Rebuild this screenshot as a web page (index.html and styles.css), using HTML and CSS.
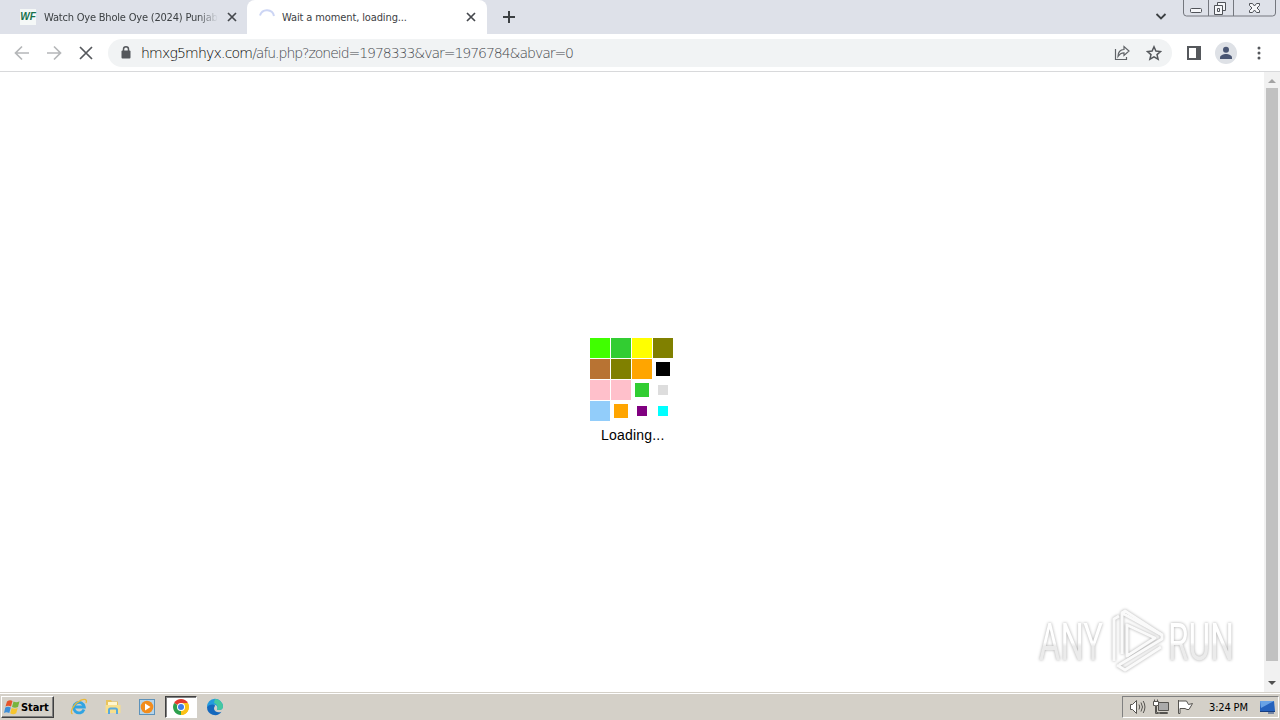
FILE: index.html
```html
<!DOCTYPE html>
<html lang="en">
<head>
<meta charset="utf-8">
<title>Wait a moment, loading...</title>
<link rel="stylesheet" href="styles.css">
</head>
<body>

<div class="tabstrip">
  <div class="tab tab-first">
    <span class="favicon">WF</span>
    <span class="tab-title faded">Watch Oye Bhole Oye (2024) Punjabi</span>
    <svg class="tab-close" width="10" height="10" viewBox="0 0 10 10"><path d="M1 1l8 8M9 1l-8 8"/></svg>
  </div>
  <div class="tab tab-active">
    <svg class="spinner" width="16" height="16" viewBox="0 0 16 16"><path d="M1 6.5A7.2 7.2 0 0 1 15 7"/></svg>
    <span class="tab-title">Wait a moment, loading...</span>
    <svg class="tab-close" width="10" height="10" viewBox="0 0 10 10"><path d="M1 1l8 8M9 1l-8 8"/></svg>
  </div>
  <svg class="newtab" width="12" height="12" viewBox="0 0 12 12"><path d="M6 0v12M0 6h12"/></svg>
  <svg class="tabsearch" width="12" height="12" viewBox="0 0 12 12"><path d="M1.5 4L6 8.5 10.5 4"/></svg>
  <svg class="winbuttons" width="94" height="17" viewBox="0 0 94 17">
    <path class="frame" d="M.5 0v13q0 3 3 3h86q3 0 3-3V0M25.500 0v16M50.500 0v16"/>
    <rect class="glyph" x="7.500" y="8.500" width="11" height="4" rx="1"/>
    <path class="glyph" d="M34.500 5.500v-3h8v8h-3M31.500 5.500h8v9h-8zM34.500 8.500h2v3h-2z"/>
    <path class="glyph" d="M66.500 3.500h3l2 2.500 2-2.500h3v2L74 8l2.500 2.500v2h-3l-2-2.500-2 2.500h-3v-2L69 8l-2.500-2.500z"/>
  </svg>
</div>

<div class="toolbar">
  <svg class="nav nav-off" width="16" height="16" viewBox="0 0 16 16"><path d="M15 8H2M8 1.500L1.500 8 8 14.500"/></svg>
  <svg class="nav nav-off" width="16" height="16" viewBox="0 0 16 16"><path d="M1 8h13M8 1.500L14.500 8 8 14.500"/></svg>
  <svg class="nav" width="16" height="16" viewBox="0 0 16 16"><path d="M2 2l12 12M14 2L2 14"/></svg>
  <div class="omnibox">
    <svg class="lock" width="10" height="13" viewBox="0 0 10 13"><rect x="0.500" y="4.500" width="9" height="8" rx="1"/><path d="M2.500 5V3.300a2.500 2.500 0 0 1 5 0V5"/></svg>
    <span class="url"><span class="host">hmxg5mhyx.com</span>/afu.php?zoneid=1978333&amp;var=1976784&amp;abvar=0</span>
    <svg class="share" width="16" height="16" viewBox="0 0 16 16"><path d="M1.500 4v10.500h11v-2.500M4 11.500C4 7 6.500 4.500 10 4.500V1.500l5 4.500-5 4.500V7.800C7.500 7.800 5.500 9 4 11.500z"/></svg>
    <svg class="star" width="16" height="16" viewBox="0 0 16 16"><path d="M8 1.800l1.900 4.300 4.600.4-3.500 3.100 1.100 4.600L8 11.800l-4.100 2.400L5 9.600 1.500 6.500l4.600-.4z"/></svg>
  </div>
  <svg class="panel" width="14" height="14" viewBox="0 0 14 14"><path d="M0 0h14v14H0zM2 2v10h7V2z" fill-rule="evenodd"/></svg>
  <svg class="avatar" width="22" height="22" viewBox="0 0 22 22"><circle class="disc" cx="11" cy="11" r="11"/><circle cx="11" cy="7.800" r="3"/><path d="M5 17v-1.500c0-2 3.500-3.500 6-3.500s6 1.500 6 3.500V17z"/></svg>
  <svg class="dots" width="4" height="14" viewBox="0 0 4 14"><circle cx="2" cy="2" r="1.500"/><circle cx="2" cy="7" r="1.500"/><circle cx="2" cy="12" r="1.500"/></svg>
</div>

<div class="page">
  <div class="view">
    <div class="loader">
      <div class="grid">
        <i class="lime"></i><i class="green"></i><i class="yellow"></i><i class="olive"></i>
        <i class="brown"></i><i class="olive"></i><i class="orange"></i><i class="black mid"></i>
        <i class="pink"></i><i class="pink"></i><i class="green mid"></i><i class="gray small"></i>
        <i class="sky"></i><i class="orange mid"></i><i class="purple small"></i><i class="cyan small"></i>
      </div>
      <div class="loading">Loading...</div>
    </div>
    <svg class="watermark" width="216" height="76" viewBox="0 0 216 76">
      <defs>
        <linearGradient id="fade" x1="0" y1="0" x2="0" y2="1">
          <stop offset=".5" stop-color="#fff"/><stop offset=".56" stop-color="#ebebeb"/>
        </linearGradient>
      </defs>
      <g class="mark">
        <text x="8" y="56" textLength="64" lengthAdjust="spacingAndGlyphs">ANY</text>
        <text x="137" y="56" textLength="66" lengthAdjust="spacingAndGlyphs">RUN</text>
        <path d="M83 57V15l5-3M86 61l8 5 36-23"/>
        <path d="M91 50V9l40 22v4L88 61"/>
        <path d="M91 9l3-2 37 24M96 21v31l28-18z"/>
      </g>
    </svg>
  </div>
  <div class="scrollbar">
    <svg width="8" height="4" viewBox="0 0 8 4"><path class="up" d="M0 4l4-4 4 4z"/></svg>
    <div class="thumb"></div>
    <svg width="8" height="4" viewBox="0 0 8 4"><path class="down" d="M0 0l4 4 4-4z"/></svg>
  </div>
</div>

<div class="taskbar">
  <div class="start">
    <svg width="17" height="16" viewBox="0 0 17 16">
      <path fill="#e6542a" d="M3 2.500q3-2 5.500-.5L7 7.500q-3-1.500-5.500 0z"/>
      <path fill="#78b43c" d="M9.500 2.500q3 1.500 6-.2L14 8q-3 1.500-6 0z"/>
      <path fill="#3d8ed8" d="M1.300 8.500q2.700-1.500 5.500 0L5.300 14q-3-1.500-5.300 0z"/>
      <path fill="#f6c52e" d="M7.700 9q3 1.500 6 0l-1.500 5.300q-3 1.700-6 0z"/>
    </svg>
    <span>Start</span>
  </div>
  <div class="quick">
    <svg width="18" height="18" viewBox="0 0 18 18"><path d="M14 11.500A5.300 5.300 0 1 1 14.300 9H5" fill="none" stroke="#31a4e2" stroke-width="2.800"/><path d="M2.500 16C-1 14 4 5.500 11 2.200 15 .5 17.500 1.500 16 5" fill="none" stroke="#e9b93a" stroke-width="1.300"/></svg>
  </div>
  <div class="quick">
    <svg width="18" height="18" viewBox="0 0 18 18"><path d="M2 3.500V2h5l1 1.500h6V15H2z" fill="#e9c45d"/><path d="M4 4h9v6H4z" fill="#fff6cf"/><path d="M1.500 7h15v8h-15z" fill="#f7df8d"/><path d="M5 16v-4q0-1.500 1.500-1.500h5Q13 10.500 13 12v4" fill="none" stroke="#58aadd" stroke-width="2"/></svg>
  </div>
  <div class="quick">
    <svg width="18" height="18" viewBox="0 0 18 18"><rect x="1.500" y="1.500" width="15" height="15" fill="#b5d4ea" stroke="#5d92ba"/><circle cx="9" cy="9" r="6.300" fill="#f28c1c"/><path d="M7 5.500v7l5.500-3.500z" fill="#fff"/></svg>
  </div>
  <div class="quick pressed">
    <svg width="16" height="16" viewBox="0 0 16 16"><path d="M8 8L1.100 4A8 8 0 0 1 14.900 4z" fill="#e33b2e"/><path d="M8 8l6.900-4A8 8 0 0 1 8 16z" fill="#fbc116"/><path d="M8 8v8A8 8 0 0 1 1.100 4z" fill="#2da04d"/><path d="M8 4h6.900A8 8 0 0 1 8 16l3.500-6z" fill="#fbc116"/><circle cx="8" cy="8" r="4" fill="#fff"/><circle cx="8" cy="8" r="3" fill="#3f7de8"/></svg>
  </div>
  <div class="quick">
    <svg width="18" height="18" viewBox="0 0 18 18"><path d="M1 9a8 8 0 0 0 14.500 4.700c-3.500 1.500-7.500 0-7.500-3.200 0-1.500 1-2 1-3C7 4.500 2 5 1 9z" fill="#1468bd"/><path d="M1 9A8 8 0 0 1 17 8.500c0 3-3 4.200-6 3.200 1.300-2 0-5.200-4-5.200-3 0-5 1-6 2.500z" fill="#249bdd"/><path d="M9 1a8 8 0 0 1 8 7.500c0 3-3 4.200-6 3.200C12.500 9 11 6 8 5z" fill="#45c8a0"/></svg>
  </div>
  <div class="tray">
    <svg class="tray-icon" width="17" height="16" viewBox="0 0 17 16"><path d="M1.500 5.500h2l4-4v13l-4-4h-2z"/><path class="line" d="M10 5.500q1.500 2.500 0 5M12 3.500q3 4.500 0 9M14.200 2q3.500 6 0 12"/></svg>
    <svg class="tray-icon" width="17" height="16" viewBox="0 0 17 16"><path class="screen" d="M5.500 3.500h10v8h-10z"/><path d="M.5 2.500h5v4h-2v7h2v1h-3v-8h-2zM1.500 2.500v-2M4.500 2.500v-2M6.500 13.500h8v1h-8z"/></svg>
    <svg class="tray-icon" width="17" height="16" viewBox="0 0 17 16"><path d="M1.500 1v13.500h1.500V9.500h5l2 1h2l3.500-6-4 1-2-3.500H1.500z"/></svg>
    <span class="clock">3:24 PM</span>
    <svg width="17" height="14" viewBox="0 0 17 14"><path d="M1 1h14l1 10H1z" fill="#2562bd"/><path d="M1 1h14L2 8z" fill="#68a2e5"/><path d="M1 11.500h15M9 13h6" stroke="#173d80" fill="none"/></svg>
  </div>
</div>

</body>
</html>
```

FILE: styles.css
```css
/* Browser window */

body
{ margin: 0;
height: 720px;
display: flex;
flex-direction: column;
overflow: hidden;
background: #fff;
font-family: "DejaVu Sans Condensed", "DejaVu Sans", sans-serif;
font-stretch: condensed;
}

svg
{ display: block;
flex: none;
}

/* Tabs */

.tabstrip
{ height: 34px;
flex: none;
display: flex;
background: #dee1e9;
}

.tab
{ display: flex;
align-items: center;
box-sizing: border-box;
height: 34px;
font-size: 11px;
color: #3c4043;
}

.tab-first
{ width: 247px;
padding: 0 10px 0 20px;
}

.tab-active
{ width: 240px;
padding: 0 11px 0 12px;
background: #fff;
border-radius: 8px 8px 0 0;
}

.favicon
{ width: 16px;
height: 16px;
margin-right: 8px;
background: #f5f8f7;
color: #17714b;
font: italic bold 10px/15px "Liberation Sans", sans-serif;
text-align: center;
}

.tab-title
{ flex: 1;
white-space: nowrap;
overflow: hidden;
letter-spacing: -0.12px;
}

.faded
{ flex: none;
width: 174px;
margin-right: 9px;
letter-spacing: -0.2px;
-webkit-mask-image: linear-gradient(90deg, #000 154px, transparent);
mask-image: linear-gradient(90deg, #000 154px, transparent);
}

.tab-close
{ fill: none;
stroke: #45484d;
stroke-width: 1.7;
}

.spinner
{ margin-right: 7px;
fill: none;
stroke: #ccd5f4;
stroke-width: 2;
}

.newtab
{ margin: 11px 0 0 16px;
fill: none;
stroke: #3c4043;
stroke-width: 2;
}

.tabsearch
{ margin: 10px 16px 0 auto;
fill: none;
stroke: #3c4043;
stroke-width: 1.8;
}

.winbuttons
{ margin-right: 3px;
}

.winbuttons path, .winbuttons rect
{ fill: none;
stroke: #74777e;
}

.winbuttons .glyph
{ fill: #f5f6f9;
stroke: #505359;
}

/* Toolbar */

.toolbar
{ height: 37px;
flex: none;
display: flex;
align-items: center;
border-bottom: 1px solid #d8d9db;
padding-left: 14px;
}

.nav
{ margin-right: 16px;
fill: none;
stroke: #55585c;
stroke-width: 1.7;
}

.nav-off
{ stroke: #b5b7b9;
}

.omnibox
{ display: flex;
align-items: center;
box-sizing: border-box;
width: 1064px;
height: 28px;
margin-left: -2px;
padding: 0 10px 0 13px;
border-radius: 14px;
background: #f1f3f4;
}

.lock
{ margin-right: 10px;
fill: #55585c;
}

.lock path
{ fill: none;
stroke: #55585c;
stroke-width: 1.5;
}

.url
{ flex: 1;
font: 200 14px "DejaVu Sans Light", "DejaVu Sans", sans-serif;
white-space: nowrap;
color: #45484d;
letter-spacing: -1.03px;
}

.host
{ color: #000;
letter-spacing: -0.8px;
}

.share
{ margin-right: 16px;
fill: none;
stroke: #606367;
stroke-width: 1.2;
}

.star
{ fill: none;
stroke: #55585c;
stroke-width: 1.5;
}

.panel
{ margin-left: 15px;
fill: #55585c;
}

.avatar
{ margin-left: 14px;
fill: #4a5673;
}

.avatar .disc
{ fill: #dee1e6;
}

.dots
{ margin-left: 20px;
fill: #55585c;
}

/* Page */

.page
{ flex: 1;
display: flex;
min-height: 0;
}

.view
{ flex: 1;
position: relative;
}

.loader
{ width: 84px;
margin: 266px 0 0 590px;
}

.grid
{ display: grid;
grid-template-columns: repeat(4, 20px);
grid-auto-rows: 20px;
gap: 1px;
place-items: center;
}

.grid i
{ width: 20px;
height: 20px;
}

.grid .mid
{ width: 14px;
height: 14px;
}

.grid .small
{ width: 10px;
height: 10px;
}

.lime { background: #40ff00; }
.green { background: #32cd32; }
.yellow { background: #ff0; }
.olive { background: #808000; }
.brown { background: #b87333; }
.orange { background: #ffa500; }
.black { background: #000; }
.pink { background: #ffc0cb; }
.gray { background: #ddd; }
.sky { background: #92cdfa; }
.purple { background: #800080; }
.cyan { background: #0ff; }

.loading
{ margin: 6px 0 0 11px;
font: 14px/16px "Liberation Sans", Arial, sans-serif;
letter-spacing: 0.2px;
white-space: nowrap;
color: #000;
}

/* Watermark lies over the page */

.watermark
{ position: absolute;
right: 17px;
bottom: 12px;
}

.mark
{ filter: drop-shadow(0 0 1.5px #aaa);
}

.mark text
{ font: 52px Roboto, sans-serif;
fill: url(#fade);
}

.mark path
{ fill: none;
stroke: #fafafa;
stroke-width: 3;
stroke-linejoin: round;
}

.scrollbar
{ width: 16px;
display: flex;
flex-direction: column;
align-items: center;
justify-content: space-between;
box-sizing: border-box;
padding: 7px 0;
background: #f1f1f1;
}

.thumb
{ width: 12px;
height: 573px;
margin: 5px 0 auto;
background: #c1c1c1;
}

.up { fill: #a3a3a3; }
.down { fill: #505050; }

/* Taskbar */

.taskbar
{ height: 26px;
flex: none;
display: flex;
align-items: center;
border-top: 1px solid #d4d0c8;
box-shadow: inset 0 1px #fff;
padding: 1px 1px 0;
background: #d4d0c8;
}

.start
{ display: flex;
align-items: center;
box-sizing: border-box;
width: 53px;
height: 22px;
margin-right: 9px;
padding-left: 2px;
border: 1px solid;
border-color: #fff #404040 #404040 #fff;
box-shadow: inset -1px -1px #808080;
font-size: 11px;
font-weight: bold;
letter-spacing: -0.1px;
color: #000;
}

.quick
{ display: flex;
align-items: center;
justify-content: center;
box-sizing: border-box;
width: 32px;
height: 22px;
margin-right: 2px;
}

.pressed
{ border: 1px solid;
border-color: #404040 #fff #fff #404040;
box-shadow: inset 1px 1px #808080;
background: #fff;
}

.tray
{ display: flex;
align-items: center;
box-sizing: border-box;
width: 157px;
height: 22px;
margin-left: auto;
padding-left: 6px;
border: 1px solid;
border-color: #808080 #fff #fff #808080;
}

.tray-icon
{ margin-right: 7px;
fill: #fff;
stroke: #55534f;
}

.tray-icon .line
{ fill: none;
}

.tray-icon .screen
{ fill: #aaa;
}

.clock
{ width: 42px;
margin: 0 8px 0 8px;
font-size: 11px;
letter-spacing: -0.15px;
white-space: nowrap;
color: #000;
}
```
